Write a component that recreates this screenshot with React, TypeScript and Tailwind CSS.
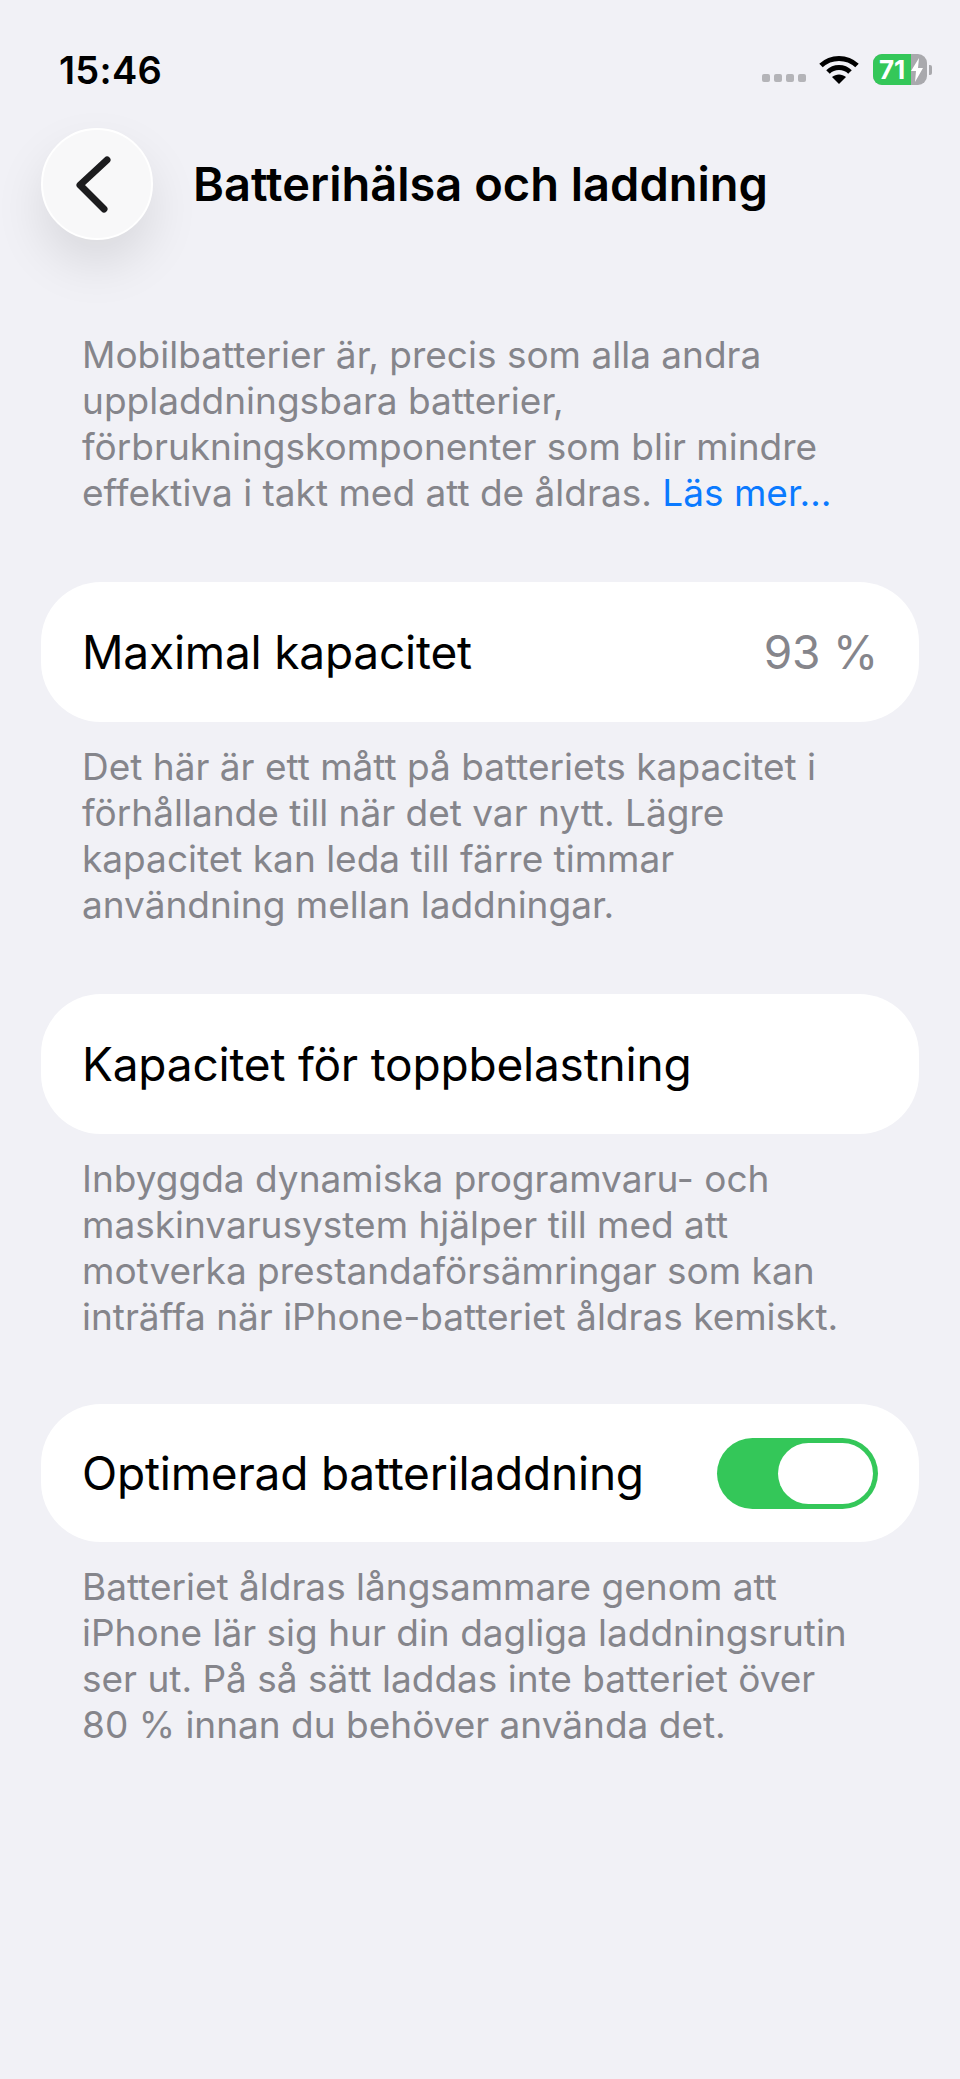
const font = { fontFamily: "Inter, 'Noto Sans', sans-serif" };

function Caption({ lines, link }: { lines: string[]; link?: string }) {
  return (
    <p className="px-[82px] text-[37px] leading-[46px] text-[#85858b] whitespace-nowrap">
      {lines.map((line, i) => (
        <span key={line} className="block">
          {line}
          {link && i === lines.length - 1 && <span className="text-[#0a7aff]"> {link}</span>}
        </span>
      ))}
    </p>
  );
}

function Card({ children, short }: { children: React.ReactNode; short?: boolean }) {
  return (
    <div className={`${short ? "h-[138px]" : "h-[140px]"} mx-[41px] rounded-[60px] bg-white pl-[41px] pr-[41px] flex items-center justify-between text-[46px] tracking-[-0.2px] text-black whitespace-nowrap`}>
      {children}
    </div>
  );
}

function StatusIcons() {
  return (
    <div className="flex items-center">
      <div className="flex gap-[4px] mt-[17px] mr-[13px]">
        {[0, 1, 2, 3].map((i) => (
          <span key={i} className="w-[8px] h-[8px] rounded-[2px] bg-[#b4b4b8]" />
        ))}
      </div>
      <svg width="40" height="30" viewBox="0 0 40 30" className="mr-[14px]">
        <path d="M2 10.5 C12 1 28 1 38 10.5" fill="none" stroke="#000" strokeWidth="5" />
        <path d="M9 17 C15 11 25 11 31 17" fill="none" stroke="#000" strokeWidth="5" />
        <path d="M20 29 L13 22 C17 18.5 23 18.5 27 22 Z" fill="#000" />
      </svg>
      <div className="relative w-[54px] h-[31px] rounded-[9px] overflow-hidden bg-[#a9a9ad] flex">
        <div className="w-[38px] bg-[#34c759]" />
        <span className="absolute left-[6px] top-0 text-[26px] leading-[31px] font-bold text-white">71</span>
        <svg width="14" height="24" viewBox="0 0 14 24" className="absolute left-[37px] top-[4px]">
          <path d="M9 0 L1 13 H6 L5 24 L13 10 H8 Z" fill="#fff" />
        </svg>
      </div>
      <div className="w-[3px] h-[10px] ml-[2px] rounded-r-[2px] bg-[#a9a9ad]" />
    </div>
  );
}

export default function App() {
  return (
    <div style={font} className="w-[960px] h-[2079px] bg-[#f1f1f6] overflow-hidden flex flex-col">
      {/* Status bar */}
      <div className="h-[128px] pl-[59px] pr-[28px] pt-[47px] flex items-start justify-between">
        <span className="text-[38px] leading-[46px] font-semibold tracking-[0.3px] text-black">15:46</span>
        <div className="pt-[7px]">
          <StatusIcons />
        </div>
      </div>

      {/* Nav */}
      <div className="flex items-center pl-[41px]">
        <button className="w-[112px] h-[112px] rounded-full bg-[#f8f8f9] border-2 border-white shadow-[0_24px_50px_rgba(0,0,0,0.10)] flex items-center justify-center">
          <svg width="40" height="60" viewBox="0 0 40 60" className="mr-[7px]">
            <path d="M33 6 L6 31 L30 55" fill="none" stroke="#1c1c1e" strokeWidth="7" strokeLinecap="round" strokeLinejoin="round" />
          </svg>
        </button>
        <h1 className="ml-[40px] text-[47px] leading-[56px] font-semibold text-black whitespace-nowrap">
          Batterihälsa och laddning
        </h1>
      </div>

      <div className="mt-[92px]">
        <Caption
          link="Läs mer…"
          lines={[
            "Mobilbatterier är, precis som alla andra",
            "uppladdningsbara batterier,",
            "förbrukningskomponenter som blir mindre",
            "effektiva i takt med att de åldras.",
          ]}
        />
      </div>

      <div className="mt-[66px]">
        <Card>
          <span>Maximal kapacitet</span>
          <span className="text-[#85858b]">93 %</span>
        </Card>
      </div>
      <div className="mt-[22px]">
        <Caption
          lines={[
            "Det här är ett mått på batteriets kapacitet i",
            "förhållande till när det var nytt. Lägre",
            "kapacitet kan leda till färre timmar",
            "användning mellan laddningar.",
          ]}
        />
      </div>

      <div className="mt-[66px]">
        <Card>
          <span>Kapacitet för toppbelastning</span>
        </Card>
      </div>
      <div className="mt-[22px]">
        <Caption
          lines={[
            "Inbyggda dynamiska programvaru- och",
            "maskinvarusystem hjälper till med att",
            "motverka prestandaförsämringar som kan",
            "inträffa när iPhone-batteriet åldras kemiskt.",
          ]}
        />
      </div>

      <div className="mt-[64px]">
        <Card short>
          <span>Optimerad batteriladdning</span>
          <div className="w-[161px] h-[71px] rounded-full bg-[#34c759] flex items-center justify-end pr-[5px]">
            <div className="w-[95px] h-[61px] rounded-full bg-white" />
          </div>
        </Card>
      </div>
      <div className="mt-[22px]">
        <Caption
          lines={[
            "Batteriet åldras långsammare genom att",
            "iPhone lär sig hur din dagliga laddningsrutin",
            "ser ut. På så sätt laddas inte batteriet över",
            "80 % innan du behöver använda det.",
          ]}
        />
      </div>
    </div>
  );
}
